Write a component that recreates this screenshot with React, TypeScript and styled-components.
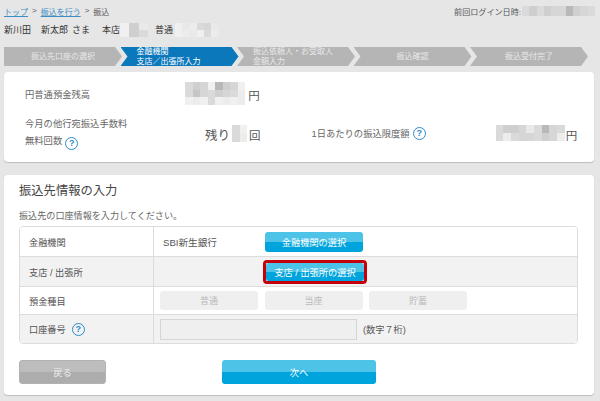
import React from 'react'
import styled, { createGlobalStyle } from 'styled-components'

const GlobalStyle = createGlobalStyle`
  html, body {
    margin: 0;
    padding: 0;
    background: #e6e6e6;
  }
  * {
    box-sizing: border-box;
  }
`

const Page = styled.div`
  width: 600px;
  height: 401px;
  overflow: hidden;
  padding: 0 6px 0 4px;
  background: #e6e6e6;
  color: #4d4d4d;
  font-family: 'Liberation Sans', 'Noto Sans CJK JP', sans-serif;
`

const TopBar = styled.div`
  display: flex;
  justify-content: space-between;
  align-items: center;
  height: 21px;
  padding-top: 1px;
  font-size: 8px;
`

const Crumbs = styled.div`
  display: flex;
  gap: 4px;
  color: #555;
`

const CrumbLink = styled.a`
  color: #3a8cc4;
  text-decoration: underline;
`

const LastLogin = styled.div`
  display: flex;
  align-items: center;
  margin-right: -1px;
  color: #555;
  font-size: 8.1px;
`

const NameRow = styled.div`
  display: flex;
  align-items: center;
  height: 17px;
  font-size: 9px;
  color: #333;
`

const NameText = styled.span<{ $left?: number }>`
  margin-left: ${(p) => p.$left ?? 0}px;
`

const Grid = styled.span<{ $cols: number; $cell: number; $row?: number; $left?: number; $right?: number }>`
  display: inline-grid;
  grid-template-columns: repeat(${(p) => p.$cols}, ${(p) => p.$cell}px);
  grid-auto-rows: ${(p) => p.$row ?? p.$cell}px;
  flex: none;
  margin-left: ${(p) => p.$left ?? 0}px;
  margin-right: ${(p) => p.$right ?? 0}px;
`

const Cell = styled.span<{ $c: string }>`
  background: ${(p) => p.$c};
`

function Mosaic(props: { shades: string[]; cols: number; cell: number; row?: number; left?: number; right?: number }) {
  return (
    <Grid $cols={props.cols} $cell={props.cell} $row={props.row} $left={props.left} $right={props.right}>
      {props.shades.map((c, i) => (
        <Cell key={i} $c={c} />
      ))}
    </Grid>
  )
}

const Steps = styled.div`
  display: flex;
  height: 19px;
  margin-top: 9px;
`

const Step = styled.div<{ $active?: boolean; $first?: boolean; $pad?: number }>`
  width: 118px;
  flex: none;
  margin-right: -1.5px;
  display: flex;
  flex-direction: column;
  justify-content: center;
  align-items: ${(p) => (p.$pad ? 'flex-start' : 'center')};
  padding-left: ${(p) => p.$pad ?? 0}px;
  background: ${(p) => (p.$active ? '#0b78bc' : '#b5b5b5')};
  color: ${(p) => (p.$active ? '#fff' : '#e9e9e9')};
  font-size: 8px;
  line-height: 9.5px;
  white-space: nowrap;
  clip-path: ${(p) =>
    p.$first
      ? 'polygon(0 0, calc(100% - 7px) 0, 100% 50%, calc(100% - 7px) 100%, 0 100%)'
      : 'polygon(0 0, calc(100% - 7px) 0, 100% 50%, calc(100% - 7px) 100%, 0 100%, 7px 50%)'};
`

const Card = styled.section`
  background: #fff;
  border-radius: 4px;
  box-shadow: 0 1px 1px #bdbdbd;
`

const BalanceCard = styled(Card)`
  height: 90px;
  margin-top: 6px;
  padding: 9px 16px 0 21px;
`

const BalanceRow = styled.div<{ $h: number }>`
  display: flex;
  align-items: center;
  height: ${(p) => p.$h}px;
`

const FeeLabel = styled.div`
  width: 180px;
  font-size: 9.3px;
  line-height: 16.5px;
  color: #666;
`

const Plain = styled.span`
  font-size: 9.3px;
  color: #666;
`

const BalanceLabel = styled(Plain)`
  width: 160px;
`

const DailyLabel = styled(Plain)`
  margin-left: 51px;
`

const Amount = styled.span<{ $size?: number }>`
  padding-top: 3px;
  font-size: ${(p) => p.$size ?? 12}px;
  color: #555;
`

const HelpCircle = styled.span<{ $left?: number }>`
  display: inline-flex;
  align-items: center;
  justify-content: center;
  width: 13px;
  height: 13px;
  margin-left: ${(p) => p.$left ?? 3}px;
  vertical-align: -2px;
  border: 1.5px solid #2b8ccb;
  border-radius: 50%;
  color: #2b8ccb;
  font-size: 9px;
  font-weight: bold;
  line-height: 1;
`

const FormCard = styled(Card)`
  height: 220px;
  margin-top: 13px;
  padding: 7px 16px 0 15px;
`

const Heading = styled.h2`
  margin: 0;
  height: 19px;
  font-size: 12.3px;
  font-weight: normal;
  line-height: 19px;
  color: #444;
`

const Lead = styled.p`
  margin: 8px 0 0;
  height: 17px;
  font-size: 9.1px;
  line-height: 14px;
  color: #666;
`

const Table = styled.div`
  border: 1px solid #dcdcdc;
  border-radius: 4px;
  overflow: hidden;
`

const Row = styled.div<{ $shade?: boolean; $h: number }>`
  display: grid;
  grid-template-columns: 134px 1fr;
  height: ${(p) => p.$h}px;
  background: ${(p) => (p.$shade ? '#f2f2f2' : '#fff')};
  & + & {
    border-top: 1px solid #dcdcdc;
  }
`

const Label = styled.div`
  display: flex;
  align-items: center;
  padding-left: 9px;
  border-right: 1px solid #dcdcdc;
  font-size: 9.2px;
  color: #555;
`

const Field = styled.div`
  display: flex;
  align-items: center;
  padding-left: 6px;
`

const Bank = styled.span`
  width: 105px;
  padding-left: 3px;
  font-size: 9.6px;
  color: #555;
`

const BlueButton = styled.button<{ $w: number; $h: number }>`
  display: block;
  width: ${(p) => p.$w}px;
  height: ${(p) => p.$h}px;
  padding: 0;
  border: 0;
  border-radius: 3px;
  background: linear-gradient(#4ec3e8 0 50%, #00a4dc 50% 100%);
  color: #fff;
  font: inherit;
  font-size: 9.2px;
`

const Highlight = styled.span`
  display: block;
  margin-left: 103px;
  border: 3px solid #c4000b;
  border-radius: 4px;
`

const Options = styled.div`
  display: flex;
  gap: 6.5px;
`

const OptionChip = styled.span`
  display: flex;
  align-items: center;
  justify-content: center;
  width: 98px;
  height: 19px;
  border-radius: 3px;
  background: #efefef;
  color: #bbb;
  font-size: 9px;
`

const DisabledInput = styled.div`
  width: 197px;
  height: 21px;
  border: 1px solid #d5d5d5;
  background: #efefef;
`

const Hint = styled.span`
  margin-left: 6px;
  font-size: 9.2px;
  color: #555;
`

const Actions = styled.div`
  display: flex;
  margin-top: 16px;
`

const BackButton = styled.button`
  width: 87px;
  height: 24px;
  padding: 0;
  border: 1px solid #b2b2b2;
  border-radius: 3px;
  background: linear-gradient(#bdbdbd 0 50%, #adadad 50% 100%);
  color: #eee;
  font: inherit;
  font-size: 9.2px;
`

const NextButton = styled(BlueButton)`
  margin-left: 116px;
`

const g = ['#e4e4e4', '#cfcfcf', '#bcbcc0', '#dadada', '#e9e9e9', '#c6c6c6', '#f0f0f0', '#b8b8b8', '#d6d6d6', '#ececec']

export default function App() {
  return (
    <Page>
      <GlobalStyle />
      <TopBar>
        <Crumbs>
          <CrumbLink>トップ</CrumbLink>
          <span>&gt;</span>
          <CrumbLink>振込を行う</CrumbLink>
          <span>&gt;</span>
          <span>振込</span>
        </Crumbs>
        <LastLogin>
          前回ログイン日時:
          <Mosaic
            cols={10}
            cell={7.3}
            row={10}
            left={1}
            shades={[g[3], g[1], g[3], g[1], g[8], g[8], g[7], g[1], g[8], g[3]]}
          />
        </LastLogin>
      </TopBar>

      <NameRow>
        <NameText>新川田</NameText>
        <NameText $left={10}>新太郎</NameText>
        <NameText $left={4}>さま</NameText>
        <NameText $left={12}>本店</NameText>
        <Mosaic cols={3} cell={9.3} row={7} shades={[g[6], g[1], g[4], g[6], g[1], g[3]]} />
        <NameText $left={7}>普通</NameText>
        <Mosaic
          left={2}
          cols={6}
          cell={7.3}
          row={7}
          shades={[g[6], g[4], g[9], g[3], g[8], g[4], g[6], g[9], g[4], g[6], g[3], g[9]]}
        />
      </NameRow>

      <Steps>
        <Step $first>振込先口座の選択</Step>
        <Step $active $pad={16}>
          <span>金融機関</span>
          <span>支店／出張所入力</span>
        </Step>
        <Step $pad={16}>
          <span>振込依頼人・お受取人</span>
          <span>金額入力</span>
        </Step>
        <Step>振込確認</Step>
        <Step>振込受付完了</Step>
      </Steps>

      <BalanceCard>
        <BalanceRow $h={25}>
          <BalanceLabel>円普通預金残高</BalanceLabel>
          <Mosaic
            cols={8}
            cell={7.5}
            shades={[
              g[3], g[1], g[8], g[6], g[7], g[1], g[8], g[6],
              g[3], g[5], g[8], g[3], g[1], g[8], g[3], g[9],
              g[6], g[9], g[6], g[3], g[6], g[9], g[6], g[9],
            ]}
          />
          <Amount $size={11.5}>&nbsp;円</Amount>
        </BalanceRow>
        <BalanceRow $h={54}>
          <FeeLabel>
            今月の他行宛振込手数料
            <br />
            無料回数
            <HelpCircle>?</HelpCircle>
          </FeeLabel>
          <Amount $size={12.5}>残り</Amount>
          <Mosaic left={2} right={2} cols={2} cell={7.5} row={8.5} shades={[g[3], g[6], g[3], g[9]]} />
          <Amount $size={11.5}>回</Amount>
          <DailyLabel>1日あたりの振込限度額</DailyLabel>
          <HelpCircle>?</HelpCircle>
          <Mosaic
            left={70}
            right={1}
            cols={9}
            cell={7.7}
            row={8}
            shades={[g[3], g[1], g[1], g[8], g[4], g[3], g[7], g[8], g[3], g[3], g[9], g[3], g[8], g[8], g[3], g[1], g[8], g[9]]}
          />
          <Amount $size={11.5}>円</Amount>
        </BalanceRow>
      </BalanceCard>

      <FormCard>
        <Heading>振込先情報の入力</Heading>
        <Lead>振込先の口座情報を入力してください。</Lead>
        <Table>
          <Row $h={29}>
            <Label>金融機関</Label>
            <Field>
              <Bank>SBI新生銀行</Bank>
              <BlueButton $w={98} $h={20}>金融機関の選択</BlueButton>
            </Field>
          </Row>
          <Row $shade $h={30}>
            <Label>支店 / 出張所</Label>
            <Field>
              <Highlight>
                <BlueButton $w={98} $h={18}>支店 / 出張所の選択</BlueButton>
              </Highlight>
            </Field>
          </Row>
          <Row $h={28}>
            <Label>預金種目</Label>
            <Field>
              <Options>
                <OptionChip>普通</OptionChip>
                <OptionChip>当座</OptionChip>
                <OptionChip>貯蓄</OptionChip>
              </Options>
            </Field>
          </Row>
          <Row $shade $h={29}>
            <Label>
              口座番号
              <HelpCircle $left={6}>?</HelpCircle>
            </Label>
            <Field>
              <DisabledInput />
              <Hint>(数字７桁)</Hint>
            </Field>
          </Row>
        </Table>
        <Actions>
          <BackButton>戻る</BackButton>
          <NextButton $w={154} $h={24}>次へ</NextButton>
        </Actions>
      </FormCard>
    </Page>
  )
}
